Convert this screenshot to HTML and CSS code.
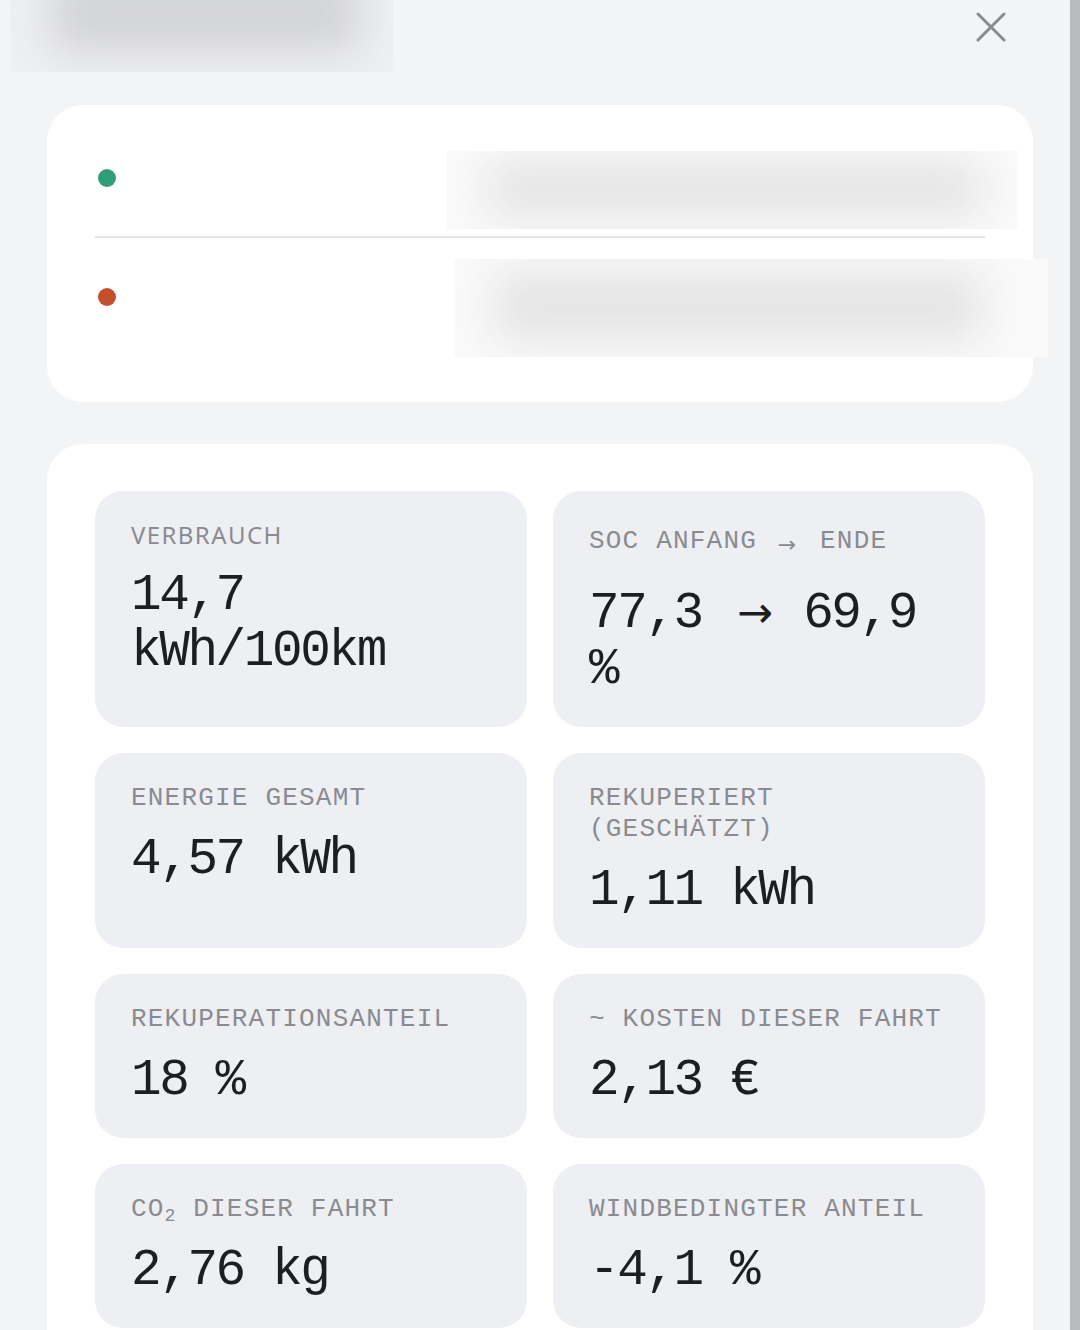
FILE: index.html
```html
<!DOCTYPE html>
<html lang="de">

<head>
    <meta charset="UTF-8">
    <meta name="viewport" content="width=device-width, initial-scale=1.0">
    <title>Fahrtdetails</title>
    <link rel="stylesheet" href="styles.css">
</head>

<body>
    <div class="sheet">
        <header class="sheet-head">
            <div class="title-blur"><span></span></div>
            <button class="close" type="button" aria-label="Schließen">
                <svg width="32" height="32" viewBox="0 0 32 32">
                    <path d="M3 3 L29 29 M29 3 L3 29" />
                </svg>
            </button>
        </header>

        <section class="card route">
            <div class="stop">
                <span class="dot dot-start"></span>
                <div class="address-blur address-start"><span></span></div>
            </div>
            <div class="stop">
                <span class="dot dot-end"></span>
                <div class="address-blur address-end"><span></span></div>
            </div>
        </section>

        <section class="card stats">
            <div class="stat-grid">
                <div class="stat">
                    <div class="stat-label stat-label-sans">Verbrauch</div>
                    <div class="stat-value">14,7 kWh/100km</div>
                </div>
                <div class="stat">
                    <div class="stat-label">SoC Anfang <span class="arrow">→</span> Ende</div>
                    <div class="stat-value">77,3 <span class="arrow">→</span> 69,9 %</div>
                </div>
                <div class="stat">
                    <div class="stat-label">Energie gesamt</div>
                    <div class="stat-value">4,57 kWh</div>
                </div>
                <div class="stat">
                    <div class="stat-label">Rekuperiert (geschätzt)</div>
                    <div class="stat-value">1,11 kWh</div>
                </div>
                <div class="stat">
                    <div class="stat-label">Rekuperationsanteil</div>
                    <div class="stat-value">18 %</div>
                </div>
                <div class="stat">
                    <div class="stat-label">~ Kosten dieser Fahrt</div>
                    <div class="stat-value">2,13 €</div>
                </div>
                <div class="stat">
                    <div class="stat-label">CO<sub>2</sub> dieser Fahrt</div>
                    <div class="stat-value">2,76 kg</div>
                </div>
                <div class="stat">
                    <div class="stat-label">Windbedingter Anteil</div>
                    <div class="stat-value">-4,1 %</div>
                </div>
            </div>
        </section>
    </div>
    <div class="scroll-rail"></div>
</body>

</html>
```

FILE: styles.css
```css
* {
    box-sizing: border-box;
}

body {
    font-family: "Liberation Mono", monospace;
    background-color: #f3f4f6;
    color: #1d1e22;
    margin: 0;
    padding: 0;
}

.sheet {
    padding: 0 47px 60px;
}

/* header: blurred title + close button */
.sheet-head {
    display: flex;
    justify-content: space-between;
    align-items: flex-start;
    height: 105px;
    margin-left: -37px;
    padding-right: 26px;
}

.title-blur {
    width: 383px;
    height: 72px;
    overflow: hidden;
    background-color: #eff0f2;
}

.title-blur span {
    display: block;
    width: 310px;
    height: 80px;
    margin: -28px 0 0 40px;
    background-color: #d2d3d5;
    filter: blur(22px);
}

.close {
    width: 32px;
    height: 32px;
    margin-top: 11px;
    padding: 0;
    border: none;
    background: none;
    cursor: pointer;
}

.close svg {
    display: block;
    stroke: #8a8b90;
    stroke-width: 3;
    stroke-linecap: round;
    fill: none;
}

.card {
    background-color: #fff;
    border-radius: 36px;
}

/* start / destination rows */
.route {
    padding: 14px 48px 47px;
}

.stop {
    display: flex;
    align-items: center;
    height: 117px;
}

.stop + .stop {
    border-top: 2px solid #e5e5ea;
    height: 119px;
}

.dot {
    width: 18px;
    height: 18px;
    border-radius: 50%;
    margin-left: 3px;
}

.dot-start {
    background-color: #2f9e79;
}

.dot-end {
    background-color: #c4502b;
}

.address-blur {
    margin-left: auto;
    overflow: hidden;
    background-color: #fafafa;
}

.address-blur span {
    display: block;
    height: 56px;
    margin: 10px 36px 0 40px;
    background-color: #e4e4e4;
    filter: blur(22px);
}

.address-start {
    width: 571px;
    height: 78px;
    margin-top: 24px;
    margin-right: -33px;
}

.address-end {
    width: 594px;
    height: 98px;
    margin-top: 22px;
    margin-right: -63px;
}

.address-end span {
    height: 70px;
    margin-top: 12px;
    margin-right: 66px;
}

/* trip statistics */
.stats {
    margin-top: 42px;
    padding: 47px 48px;
}

.stat-grid {
    display: grid;
    grid-template-columns: 1fr 1fr;
    gap: 26px;
}

.stat {
    background-color: #eeeff3;
    border-radius: 28px;
    padding: 30px 36px 29px;
}

.stat-label {
    font-size: 26px;
    line-height: 31px;
    letter-spacing: 1.2px;
    text-transform: uppercase;
    color: #8a8b90;
}

.stat-label-sans {
    font-family: "Noto Sans", sans-serif;
    font-size: 24px;
    letter-spacing: 1.4px;
    margin-top: -2px;
    margin-bottom: 2px;
}

.stat-label sub {
    font-size: 0.7em;
    line-height: 0;
    vertical-align: -0.3em;
    letter-spacing: 0.05em;
}

.stat-value {
    margin-top: 18px;
    font-size: 51px;
    line-height: 56px;
    letter-spacing: -2.4px;
}

.arrow {
    font-family: "DejaVu Sans", sans-serif;
}

.stat-value .arrow {
    font-size: 0.84em;
    line-height: 0;
    letter-spacing: 0;
    margin: 0 2px 0 7px;
}

.stat-label .arrow {
    font-size: 22px;
    line-height: 47px;
    vertical-align: -4px;
    letter-spacing: 2px;
    margin: 0 5px 0 4px;
}

.scroll-rail {
    position: fixed;
    top: 0;
    right: 0;
    width: 10px;
    height: 100%;
    background-color: #b9babd;
}
```
